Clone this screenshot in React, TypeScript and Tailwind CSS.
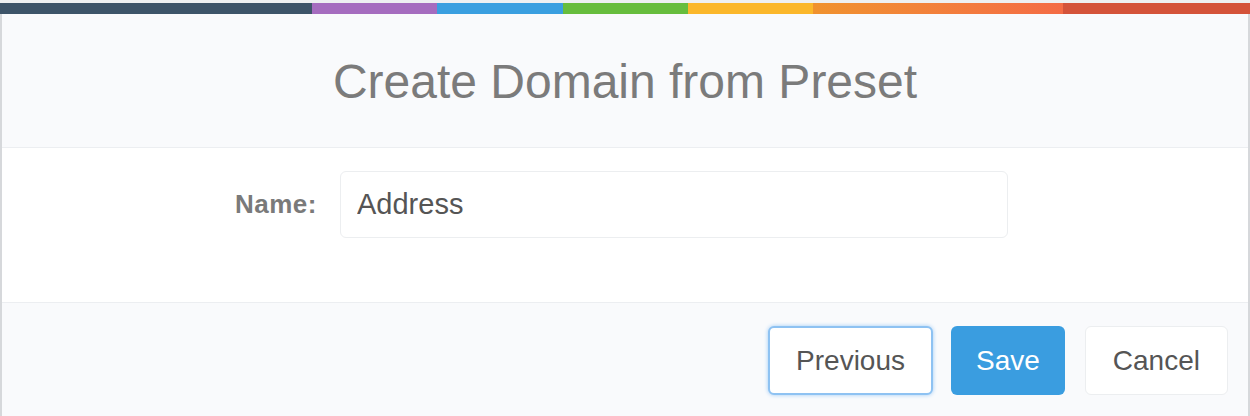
import React, { useState } from 'react';

const segments = [
  { w: 'w-[312px]', c: 'bg-[#3d5469]' },
  { w: 'w-[125px]', c: 'bg-[#a56cbf]' },
  { w: 'w-[126px]', c: 'bg-[#3a9fe0]' },
  { w: 'w-[125px]', c: 'bg-[#67bd3d]' },
  { w: 'w-[125px]', c: 'bg-[#fbb72b]' },
  { w: 'w-[250px]', c: 'bg-gradient-to-r from-[#f0922e] to-[#f46b45]' },
  { w: 'flex-1', c: 'bg-[#d4533a]' },
];

export default function App() {
  const [name, setName] = useState('Address');

  return (
    <div
      className="w-[1250px] h-[416px] overflow-hidden bg-white flex flex-col"
      style={{ fontFamily: '"Liberation Sans", Arial, sans-serif' }}
    >
      {/* colour strip of the page behind */}
      <div className="h-[3px] bg-[#eef0f2]" />
      <div className="flex h-[11px]">
        {segments.map((s, i) => (
          <div key={i} className={`${s.w} ${s.c}`} />
        ))}
      </div>

      <div className="flex-1 flex flex-col border-l-2 border-r-2 border-[#d6d8db]">
        <div className="h-[134px] bg-[#f9fafc] border-b border-[#eceef1] flex items-center justify-center pt-[3px]">
          <h1 className="text-[48px] font-light text-[#7b7b7b] leading-none">
            Create Domain from Preset
          </h1>
        </div>

        <div className="h-[154px] bg-white pt-[23px] flex items-start">
          <label className="w-[315px] text-right text-[26px] tracking-[0.5px] font-bold text-[#7a7a7a] leading-[67px]">
            Name:
          </label>
          <input
            value={name}
            onChange={(e) => setName(e.target.value)}
            className="ml-[23px] w-[668px] h-[67px] rounded-[6px] border border-[#eceef0] bg-white px-[16px] text-[29px] text-[#555] outline-none"
          />
        </div>

        <div className="flex-1 bg-[#f9fafc] border-t border-[#eceef1] flex justify-end items-start pt-[23px] pr-[20px]">
          <button className="h-[69px] px-[26px] rounded-[6px] bg-white border-2 border-[#8ec2f2] shadow-[0_0_4px_#9fcbf5] text-[28px] text-[#555]">
            Previous
          </button>
          <button className="ml-[18px] h-[69px] px-[25px] rounded-[6px] bg-[#3a9de0] text-[28px] text-white">
            Save
          </button>
          <button className="ml-[20px] h-[69px] px-[27px] rounded-[6px] bg-white border border-[#eceef0] text-[28px] text-[#555]">
            Cancel
          </button>
        </div>
      </div>
    </div>
  );
}
